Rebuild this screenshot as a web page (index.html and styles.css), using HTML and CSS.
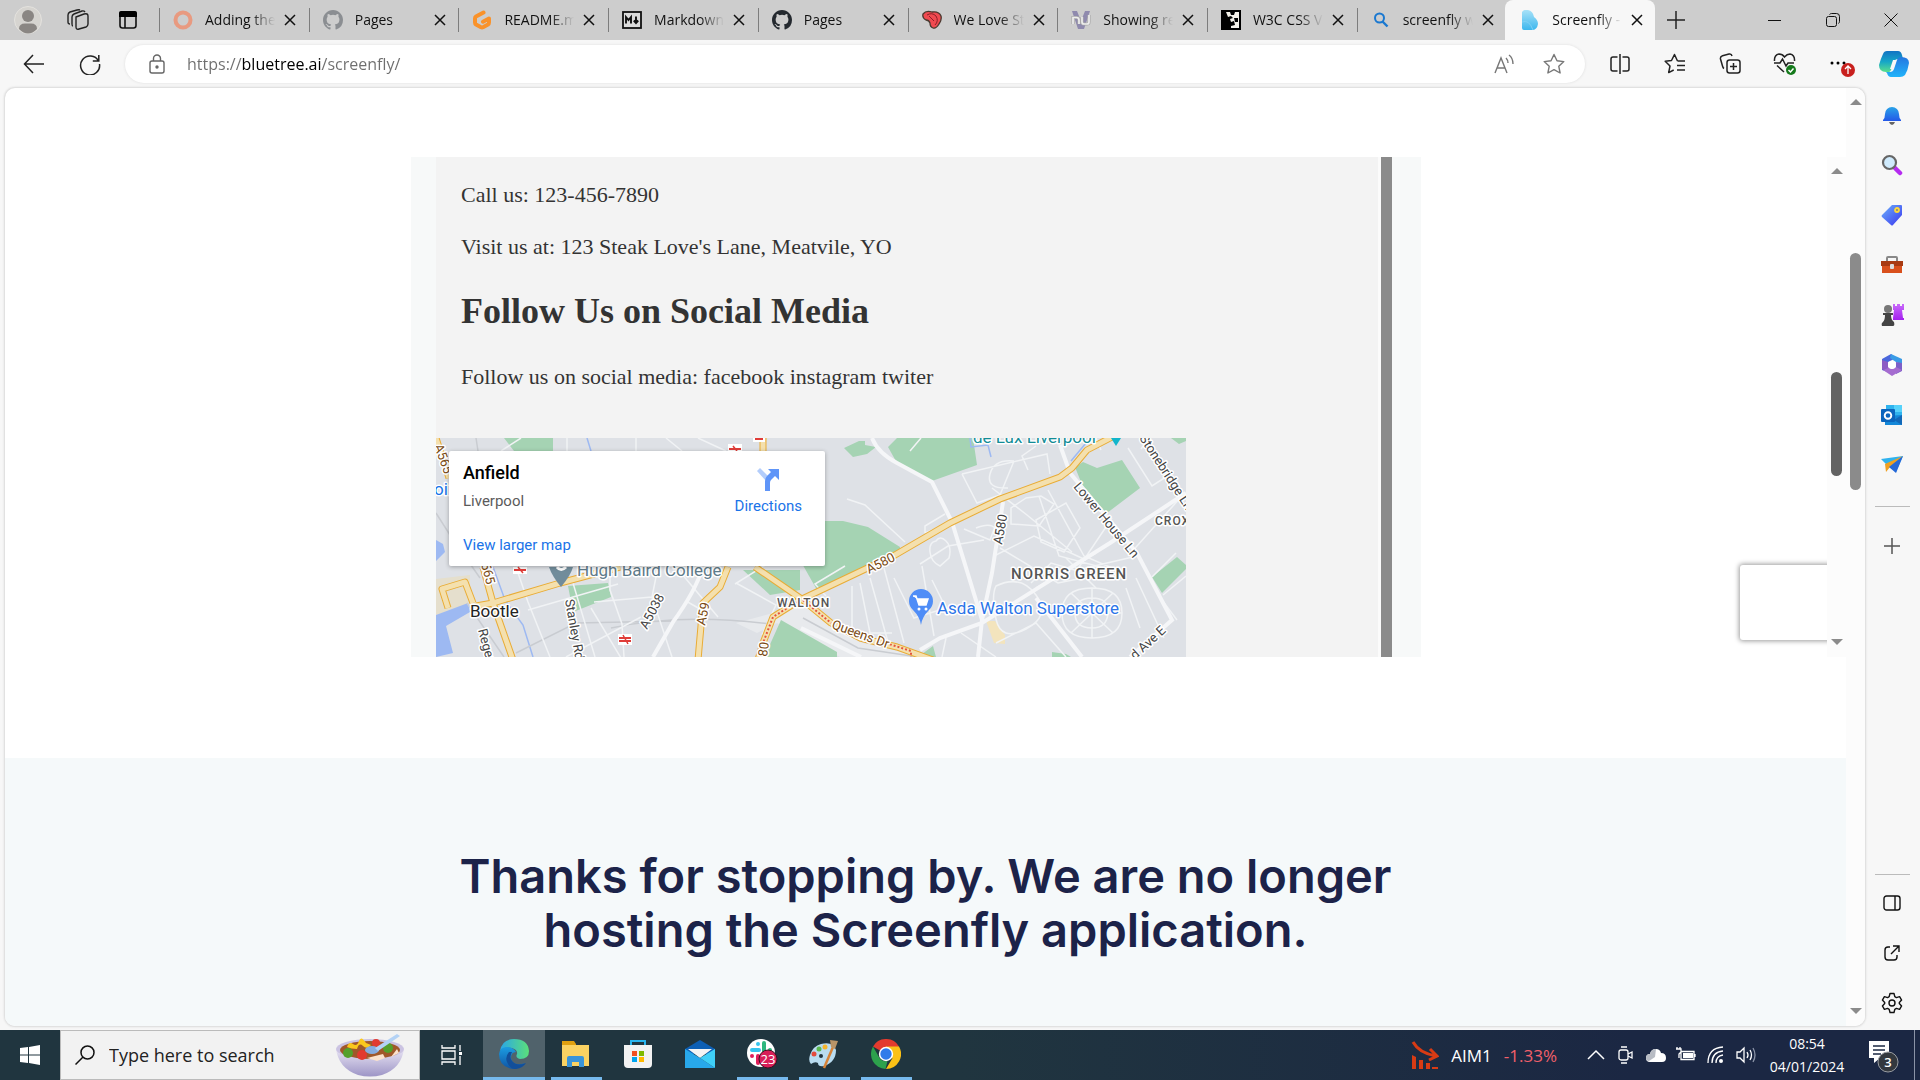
FILE: index.html
```html
<!DOCTYPE html>
<html lang="en">
<head>
<meta charset="utf-8">
<title>Screenfly</title>
<link rel="stylesheet" href="styles.css">
</head>
<body>
<svg class="defs" aria-hidden="true">
  <defs>
    <symbol id="x" viewBox="0 0 12 12"><path d="M1 1l10 10M11 1L1 11" fill="none" stroke="#111" stroke-width="1.5"/></symbol>
    <symbol id="github" viewBox="0 0 16 16"><path fill="currentColor" d="M8 0C3.58 0 0 3.58 0 8c0 3.54 2.29 6.53 5.47 7.59.4.07.55-.17.55-.38 0-.19-.01-.82-.01-1.49-2.01.37-2.53-.49-2.69-.94-.09-.23-.48-.94-.82-1.13-.28-.15-.68-.52-.01-.53.63-.01 1.08.58 1.23.82.72 1.21 1.87.87 2.33.66.07-.52.28-.87.51-1.07-1.78-.2-3.64-.89-3.64-3.95 0-.87.31-1.59.82-2.15-.08-.2-.36-1.02.08-2.12 0 0 .67-.21 2.2.82a7.6 7.6 0 014 0c1.53-1.04 2.2-.82 2.2-.82.44 1.1.16 1.92.08 2.12.51.56.82 1.27.82 2.15 0 3.07-1.87 3.75-3.65 3.95.29.25.54.73.54 1.48 0 1.07-.01 1.93-.01 2.2 0 .21.15.46.55.38A8.01 8.01 0 0016 8c0-4.42-3.58-8-8-8z"/></symbol>
    <linearGradient id="gBlue" x1="0" y1="0" x2="0" y2="1"><stop offset="0" stop-color="#29a3e8"/><stop offset="1" stop-color="#2358e8"/></linearGradient>
    <linearGradient id="gTag" x1="0" y1="0" x2="1" y2="1"><stop offset="0" stop-color="#6cb2fa"/><stop offset="1" stop-color="#3a35f0"/></linearGradient>
    <linearGradient id="gPurple" x1="0" y1="0" x2="0" y2="1"><stop offset="0" stop-color="#c86bfa"/><stop offset="1" stop-color="#a420ee"/></linearGradient>
    <linearGradient id="gCop1" x1="0" y1="0" x2="0" y2="1"><stop offset="0" stop-color="#1273c4"/><stop offset=".5" stop-color="#16a6c8"/><stop offset="1" stop-color="#5be08c"/></linearGradient>
    <linearGradient id="gCop2" x1="0" y1="0" x2="0" y2="1"><stop offset="0" stop-color="#2476e0"/><stop offset="1" stop-color="#22b4fa"/></linearGradient>
    <linearGradient id="gEdge" x1="0" y1="0" x2="1" y2="0"><stop offset="0" stop-color="#2aa6e8"/><stop offset="1" stop-color="#5be07a"/></linearGradient>
    <linearGradient id="gEdge2" x1="0" y1="0" x2="0" y2="1"><stop offset="0" stop-color="#1b9de2"/><stop offset="1" stop-color="#1055a5"/></linearGradient>
    <linearGradient id="gBowl" x1="0" y1="0" x2="0" y2="1"><stop offset="0" stop-color="#ece8f6"/><stop offset="1" stop-color="#9d95c6"/></linearGradient>
    <linearGradient id="gFly" x1="0" y1="0" x2="0" y2="1"><stop offset="0" stop-color="#a9e2f8"/><stop offset="1" stop-color="#3db7ee"/></linearGradient>
  </defs>
</svg>

<div class="browser">
  <header class="tabstrip">
    <div class="strip-tools">
      <button aria-label="Profile"><svg width="28" height="28" viewBox="0 0 28 28"><circle cx="14" cy="14" r="13.500" fill="#d6d4d0" stroke="#e4e2de"/><circle cx="14" cy="10" r="6" fill="#8a8683"/><path d="M5 23q0-5.500 6-5.500h6q6 0 6 5.500-9 9-18 0z" fill="#8a8683"/></svg></button>
      <button aria-label="Workspaces"><svg width="22" height="22" viewBox="0 0 22 22" fill="none" stroke="#222" stroke-width="1.400"><path d="M9 8l8-3q4-1 4 2v8q0 2-2 3l-7 2q-3 1-3-2z"/><path d="M6 17q-1 0-1-2V8q0-2 2-3l8-3q2-.500 3 1M3 15q-2 0-2-2V6q0-2 2-3l7-2q2-.500 3 0"/></svg></button>
      <button aria-label="Tab actions"><svg width="20" height="20" viewBox="0 0 20 20"><rect x="2" y="2" width="16" height="16" rx="2.500" fill="none" stroke="#111" stroke-width="1.600"/><path d="M1 7V3q0-2 2-2h14q2 0 2 2v4z" fill="#000"/><path d="M7 7v11" stroke="#111" stroke-width="1.600"/></svg></button>
    </div>
    <nav class="tabs" aria-label="Tabs">
      <div class="tab"><svg class="fav" viewBox="0 0 20 20"><circle cx="10" cy="10" r="7.500" fill="none" stroke="#e89a80" stroke-width="4"/></svg><span class="tab-title">Adding the</span><button aria-label="Close tab"><svg class="x"><use href="#x"/></svg></button></div>
      <div class="tab"><svg class="fav gh-grey"><use href="#github"/></svg><span class="tab-title">Pages</span><button aria-label="Close tab"><svg class="x"><use href="#x"/></svg></button></div>
      <div class="tab"><svg class="fav" viewBox="0 0 20 20"><path d="M11.500 2.500L4 6.500q-1 .600-1 2v4q0 1.400 1 2l5 2.700q1 .500 2 0l5-2.700q1-.600 1-2V8.500l-6 3.200" fill="none" stroke="#f9922a" stroke-width="4" stroke-linecap="round" stroke-linejoin="round"/></svg><span class="tab-title">README.md</span><button aria-label="Close tab"><svg class="x"><use href="#x"/></svg></button></div>
      <div class="tab"><svg class="fav" viewBox="0 0 20 20"><rect x="1" y="2" width="18" height="16" fill="#dcdcdc" stroke="#111" stroke-width="1.800"/><path d="M4 13.500V7l2.500 3L9 7v6.500M14 6.500v6M11.800 10.500L14 13l2.200-2.500" fill="none" stroke="#111" stroke-width="1.900"/></svg><span class="tab-title">Markdown</span><button aria-label="Close tab"><svg class="x"><use href="#x"/></svg></button></div>
      <div class="tab"><svg class="fav gh-dark"><use href="#github"/></svg><span class="tab-title">Pages</span><button aria-label="Close tab"><svg class="x"><use href="#x"/></svg></button></div>
      <div class="tab"><svg class="fav" viewBox="0 0 20 20"><path d="M1 4q3-4 9-2 7-1 9 4 1 4-2 8-3 5-6 4-3-1-3-5-1-3-4-3-4-2-3-6z" fill="#f04a50" stroke="#4a3a30" stroke-width="1.300"/><path d="M5 5q5-3 9 1 3 5-1 9M7 6l5 5" fill="none" stroke="#8c1f28" stroke-width="1"/></svg><span class="tab-title">We Love Steak</span><button aria-label="Close tab"><svg class="x"><use href="#x"/></svg></button></div>
      <div class="tab"><svg class="fav" viewBox="0 0 20 20"><path d="M1 1h5l4 10 4-10h5l-6 18H7z" fill="#8f8aae"/><path d="M2 14V7.500h3.500Q8 7.500 8 10v4m3-7v5q0 2 2 2h3q2 0 2-2V5" fill="none" stroke="#aaa" stroke-width="3.200"/><path d="M2 14V7.500h3.500Q8 7.500 8 10v4m3-7v5q0 2 2 2h3q2 0 2-2V5" fill="none" stroke="#eee" stroke-width="1.700"/></svg><span class="tab-title">Showing results</span><button aria-label="Close tab"><svg class="x"><use href="#x"/></svg></button></div>
      <div class="tab"><svg class="fav" viewBox="0 0 20 20"><path d="M0 0h20v20H0z"/><path d="M5 2l4 0 1 3 3 0 1-3h4v16h-8v-2l4-1-1-4-3 1-1-3 3-1-2-2-3 1z" fill="#f4f1ea"/><path d="M13 8h4v4h-3z"/></svg><span class="tab-title">W3C CSS Validator</span><button aria-label="Close tab"><svg class="x"><use href="#x"/></svg></button></div>
      <div class="tab"><svg class="fav" viewBox="0 0 20 20"><circle cx="8.500" cy="8" r="4.500" fill="none" stroke="#1a78d0" stroke-width="2"/><path d="M11.500 11.500l5 5" stroke="#1a78d0" stroke-width="2.400"/></svg><span class="tab-title">screenfly website</span><button aria-label="Close tab"><svg class="x"><use href="#x"/></svg></button></div>
      <div class="tab active"><svg class="fav" viewBox="0 0 20 20"><path d="M2 2q2-3 6-2 5 1 6 7 4 3 4 7-1 6-6 6H4q-2 0-2-2z" fill="url(#gFly)"/><path d="M2 12q7-3 11 8" fill="none" stroke="#7fd0f4"/></svg><span class="tab-title">Screenfly - BlueTree</span><button aria-label="Close tab"><svg class="x"><use href="#x"/></svg></button></div>
    </nav>
    <button class="newtab" aria-label="New tab"><svg width="18" height="18" viewBox="0 0 18 18"><path d="M9 0v18M0 9h18" stroke="#222" stroke-width="1.500"/></svg></button>
    <div class="winctl">
      <button aria-label="Minimise"><svg width="14" height="14" viewBox="0 0 14 14"><path d="M0 7.500h13" stroke="#111"/></svg></button>
      <button aria-label="Restore"><svg width="14" height="14" viewBox="0 0 14 14" fill="none" stroke="#111"><rect x=".5" y="3.500" width="10" height="10" rx="2"/><path d="M3.500 1.500q1-1 2-1h5q3 0 3 3v5q0 1-1 2"/></svg></button>
      <button aria-label="Close window"><svg width="14" height="14" viewBox="0 0 14 14"><path d="M.5 .5l13 13M13.500 .5l-13 13" stroke="#111"/></svg></button>
    </div>
  </header>

  <div class="toolbar">
    <button aria-label="Back"><svg width="22" height="20" viewBox="0 0 22 20"><path d="M21 10H2M10 1L1.500 10l8.500 9" fill="none" stroke="#222" stroke-width="1.500"/></svg></button>
    <button aria-label="Refresh"><svg width="22" height="22" viewBox="0 0 22 22"><path d="M19.500 8A9.500 9.500 0 1 0 20.500 11M19.800 2v6h-6" fill="none" stroke="#222" stroke-width="1.500"/></svg></button>
    <div class="address">
      <svg width="18" height="20" viewBox="0 0 18 20" fill="none" stroke="#666" stroke-width="1.400"><rect x="2" y="7" width="14" height="12" rx="2"/><path d="M5.500 7V4.500a3.500 3.500 0 0 1 7 0V7"/><circle cx="9" cy="13" r="1" fill="#666"/></svg>
      <input class="url" aria-label="Address" value="https://bluetree.ai/screenfly/">
      <button aria-label="Read aloud"><svg width="20" height="20" viewBox="0 0 20 20" fill="none" stroke="#777" stroke-width="1.400"><path d="M1 19L7 4l6 15M3 14h8M12 4q2 2 2 5M15 1q4 3 4 9"/></svg></button>
      <button aria-label="Favourite"><svg width="22" height="22" viewBox="0 0 22 22"><path d="M11 1.500l3 6.200 6.800.900-5 4.700 1.300 6.700-6.100-3.300L4.900 20l1.300-6.700-5-4.700 6.800-.900z" fill="none" stroke="#777" stroke-width="1.400" stroke-linejoin="round"/></svg></button>
    </div>
    <div class="tools">
      <button aria-label="Split screen"><svg width="20" height="20" viewBox="0 0 20 20" fill="none" stroke="#222" stroke-width="1.500"><path d="M7.500 3H3Q1 3 1 5v10q0 2 2 2h4.500M12.500 3H17q2 0 2 2v10q0 2-2 2h-4.500M10 0v20"/></svg></button>
      <button aria-label="Favourites"><svg width="22" height="22" viewBox="0 0 22 22" fill="none" stroke="#222" stroke-width="1.500"><path d="M13.500 8L10.500 1.500l-3 6-6.300.800 4.800 4.700-1.300 6.600 5-2.600M13.500 8H21M13 12.500h8M13 17h8" stroke-linejoin="round"/></svg></button>
      <button aria-label="Collections"><svg width="22" height="22" viewBox="0 0 22 22" fill="none" stroke="#222" stroke-width="1.500"><rect x="8" y="7" width="13" height="13" rx="2.500"/><path d="M14.500 10v7M11 13.500h7M5 15.500Q4 15 3.500 13L1.500 6q-.500-2.500 2-3.200L10 1q2.500-.500 3 2"/></svg></button>
      <button aria-label="Browser essentials"><svg width="24" height="24" viewBox="0 0 24 24" fill="none" stroke="#222" stroke-width="1.500"><path d="M1.500 9Q1 3 6 2q3.500 0 5.500 3Q14 2 17 2q5 1 4.500 7M1 11h6l2.500-4 3.500 7 2-3h6M4 13.500l7 6.500"/><circle cx="18" cy="18" r="5" fill="#157a1c" stroke="none"/><path d="M15.500 18l2 2 3-3.500" stroke="#fff"/></svg></button>
      <button aria-label="Settings and more"><svg width="30" height="26" viewBox="0 0 30 26"><circle cx="7" cy="12" r="1.500"/><circle cx="13" cy="12" r="1.500"/><circle cx="19" cy="12" r="1.500"/><circle cx="23" cy="19" r="7" fill="#c8201e"/><path d="M23 23v-7.500M20 18l3-3 3 3" fill="none" stroke="#fff" stroke-width="1.300"/></svg></button>
      <button class="copilot" aria-label="Copilot"><svg width="30" height="28" viewBox="0 0 30 28"><path d="M8 1h11q3 0 4 4l1 4h-5q-3 0-4 3l-3 8q-1 3-5 2-7 0-7-7Q2 8 4 4q1-3 4-3z" fill="url(#gCop1)"/><path d="M21 27H12q-3 0-4-4l-1-1h4q3 0 4-3l3-9q1-3 4-3 8 0 8 6-1 7-4 12-2 2-5 2z" fill="url(#gCop2)"/><path d="M14 10h3l-3 9h-3z" fill="#f7f7f7"/></svg></button>
    </div>
  </div>

  <div class="middle">
    <main class="page">
      <div class="content">
        <section class="preview">
          <div class="stage">
            <article class="device">
              <div class="site">
                <div class="copy">
                  <p>Call us: 123-456-7890</p>
                  <p>Visit us at: 123 Steak Love's Lane, Meatvile, YO</p>
                  <h2>Follow Us on Social Media</h2>
                  <p>Follow us on social media: facebook instagram twiter</p>
                </div>
                <div class="map">
                  <svg class="map-art" viewBox="0 0 750 219" width="750" height="219">
                    <path fill="#dee1e6" d="M0 0h750v219H0z"/>
                    <path fill="#e5dfcd" d="M0 141l34-4 0 28-34 12z"/>
                    <path fill="#e8eaed" d="M300 185l67-18 60 38 60 14H404l-63-34-20 10z"/>
                    <g fill="#a5d3b3">
                      <path d="M68 0h49v13H78zM452 9l9-9h76l4 27-45 16-35-18zM408 10l15-7 6 0v4l11 2-9 7-14 3zM371 83h36l25 6 32 20v5l-83 38-17-30zM639 29l8-5 14 6 25-8 18 28-33 25-20-16zM716 139l25-20 9 8v4l-24 24zM345 182l56 32v8h-74zM132 148l40-3 3 14-38 15zM307 132h57v20l-30 5zM497 208l3 11h-18zM616 214l14 2 10 6h-24zM735 0h15v3l-7 3z"/>
                    </g>
                    <path fill="#9db9f2" d="M0 102l7 4 2 8-9 9zM0 177l32-12 2 9-24 14 7 27-17 4z"/>
                    <path fill="#f3e4bd" d="M550 183l9 0 10 14 0 9-11-1z"/>
                    <g fill="none" stroke="#9db9f2" stroke-width="1.500"><path d="M151 0l4 13M57 129l12 33 18 25 10 32M534 0l1 9 17-2 3 12M650 5l-15 18"/></g>
                    <g fill="none" stroke="#c9ccd1" stroke-width="1.500"><path d="M0 75l14 22 30 43M40 0l2 13M31 165l37 54M175 190q70-15 160-4M80 215l60-30 100-2M367 180l55 30 60 9"/></g>
                    <g fill="none" stroke="#f1f3f5" stroke-width="1.500">
                      <path d="M85 0l-20 13M131 0v13M200 0v13M230 0l16 13M262 0l28 13M80 129l12 35 22 55M92 172l90-26M130 219l75-40M137 145l22 74M174 130v22l12 34 2 33M222 129l-6 30M216 159l-58 5M216 159l20 60M240 129l42 50M300 145l40 22-14 30M250 163l14 8M155 170l30 50"/>
                      <path d="M411 61l18 6 40 37M485 0l-11 13M526 36l15 29 23-8 14-34M578 23q-20-2-24 13t18 14M526 36l85-20 3 20M600 8l-14 10 6 14M489 95v-7l20-12M489 95l34-13 34-21M556 50l35 27 45 37M590 60l-15 10v16l28 2 15-22-13-8zM612 52l36 66 28 12M540 90q30-12 18 28l40-20 52 24M564 110l58 35 50-10M566 70l-12 32-26-11M603 58l20 60 45 12M630 65l14 25-16 24-23-10-5-22zM676 80l-35 52 60-14M660 0l5 12M692 10l24 38 20-13M705 11l8-11M692 118l53-59M716 139l24-24"/>
                      <path d="M500 103q4-6 10 0t3 17l-9 8q-9-4-10-14t6-11zM484 126l28-18 36-6M416 148v52l-8-4M424 145l10 50h22M434 140l18 64M448 130l20 75M486 128l12 70M496 142l14 28 28 8M510 170l-32 10-20-40M560 148q25-12 40 9t-10 34-30-10 0-33zM595 145l20-20 34 10M656 200q-30 0-30-25t30-25 30 25-30 25zM656 190q-17 0-17-15t17-15 16 15-16 15zM656 150v50M626 175h60M635 155l42 40M677 155l-42 40M690 150l14 40M700 140l28 60M600 150l60-35M560 205l40-20 30 34M510 200l-4 19M525 195l35 24"/>
                      <path d="M390 158l-11-12 30-18M299 146l35-22M727 157l23-19M741 182l-15-20M630 120l30 30"/>
                    </g>
                    <g fill="none" stroke="#f5f6f8" stroke-width="4"><path d="M436 0q6 15 25 25l35 19 20 40 30 98-4 37M567 64l-11 71-10 47M624 7l10 28 67 80 35 67-42 37M484 212l20-12 42-15 128-80 76-50M267 129q-8 25-30 55l-20 35M365 190l60 29M600 160l46 59"/></g>
                    <g fill="none" stroke-linejoin="round">
                      <path stroke="#e9ac35" stroke-width="7" d="M0 0l13 40M47 129l10 36 20 57M37 165l-8-21-23 7 6 19M40 168l17-3 67-20 60-16M292 129l-8 20-17 16-5 57M319 129l48 33 28 23 29 15 37 9 36 13M364 162l95-45 55-32 50-24 60-22 12-9 15-18 29-15M364 162l-27 17-10 26-6 20M327 0v13"/>
                      <path stroke="#f4e0ae" stroke-width="5" d="M0 0l13 40M47 129l10 36 20 57M37 165l-8-21-23 7 6 19M40 168l17-3 67-20 60-16M292 129l-8 20-17 16-5 57M319 129l48 33 28 23 29 15 37 9 36 13M364 162l95-45 55-32 50-24 60-22 12-9 15-18 29-15M364 162l-27 17-10 26-6 20M327 0v13"/>
                      <path stroke="#e5533d" stroke-width="2" stroke-dasharray="2 2" d="M364 162l-27 17-10 26M367 162l28 23M450 205l25 8v7"/>
                    </g>
                    <g><path fill="#fff" d="M77 129h14v7H77zM182 196h14v11h-14zM292 6h14v8h-14zM317 0h12v4h-12z"/><path d="M78 132h12M183 200h12M183 203h12M293 11h12M319 1h8" stroke="#e03c38" stroke-width="2" fill="none"/><path d="M187 197l5 9M82 129l5 6M297 8l4 5" stroke="#e03c38" stroke-width="1.500"/></g>
                    <path d="M113 129h24q-2 8-12 20-9-11-12-20z" fill="#718c9b"/><path d="M121 129q4 5 9 0" fill="none" stroke="#fff" stroke-width="3"/>
                    <path d="M675 0h10l-5 8z" fill="#12b5cb"/>
                    <path d="M485 187q-1-8-8-15a12 12 0 1 1 16 0q-7 7-8 15z" fill="#4f8df7"/>
                    <path d="M477 158h3l3 9h7l2-6h-11" fill="#fff" stroke="#fff" stroke-width="1.500"/><circle cx="483" cy="171" r="1.500" fill="#fff"/><circle cx="490" cy="171" r="1.500" fill="#fff"/>
                    <g class="labels">
                      <text x="141" y="138" font-size="17" fill="#5f7b8a">Hugh Baird College</text>
                      <text x="34" y="179" font-size="17" fill="#222">Bootle</text>
                      <text x="-2" y="57" font-size="17" fill="#1a73e8">oir</text>
                      <text x="501" y="176" font-size="17" fill="#2b74e8">Asda Walton Superstore</text>
                      <text x="537" y="5" font-size="17" fill="#128c96">de Lux Liverpool</text>
                      <text x="575" y="141" class="area">NORRIS GREEN</text>
                      <text x="341" y="169" class="area small">WALTON</text>
                      <text x="719" y="87" class="area small">CROXTETH</text>
                      <text transform="translate(433 136)rotate(-27)" fill="#7a4a12">A580</text>
                      <text transform="translate(566 107)rotate(-80)">A580</text>
                      <text transform="translate(211 192)rotate(-62)">A5038</text>
                      <text transform="translate(269 188)rotate(-78)" fill="#7a4a12">A59</text>
                      <text transform="translate(331 219)rotate(-83)" fill="#7a4a12">80</text>
                      <text transform="translate(395 190)rotate(20)" fill="#7a4a12">Queens Dr</text>
                      <text transform="translate(637 49)rotate(50)">Lower House Ln</text>
                      <text transform="translate(703 0)rotate(57)">Stonebridge Ln</text>
                      <text transform="translate(699 222)rotate(-42)">d Ave E</text>
                      <text transform="translate(129 162)rotate(80)">Stanley Rd</text>
                      <text transform="translate(42 192)rotate(75)">Regent</text>
                      <text transform="translate(45 126)rotate(75)" fill="#7a4a12">565</text>
                      <text transform="translate(-2 8)rotate(70)" fill="#7a4a12">A565</text>
                    </g>
                  </svg>
                  <div class="place">
                    <div class="place-info">
                      <strong>Anfield</strong>
                      <span>Liverpool</span>
                      <a href="#map">View larger map</a>
                    </div>
                    <a class="directions" href="#directions"><svg width="24" height="24" viewBox="0 0 24 24"><path d="M1 3l3-3 9 9-3 4z" fill="#b3cdfb"/><path d="M9 23V13q0-3 2-5l4-4-3-3h11v11l-4-4-4 4q-1 1-1 3v8z" fill="#5f95f8"/></svg>Directions</a>
                  </div>
                </div>
              </div>
              <div class="site-scroll"></div>
            </article>
            <div class="popup"></div>
          </div>
          <div class="scrollbar inner"><i class="up"></i><div class="track"><b></b></div><i class="down"></i></div>
        </section>
        <section class="notice"><h1>Thanks for stopping by. We are no longer<br>hosting the Screenfly application.</h1></section>
      </div>
      <div class="scrollbar outer"><i class="up"></i><div class="track"><b></b></div><i class="down"></i></div>
    </main>

    <aside class="sidebar">
      <div class="side-group">
        <button aria-label="Notifications"><svg width="22" height="22" viewBox="0 0 22 22"><path d="M2 16q2-2 2-6a7 7 0 0 1 14 0q0 4 2 6v1H2z" fill="url(#gBlue)"/><path d="M8 18h6q-1 3-3 3t-3-3z" fill="#666"/></svg></button>
        <button aria-label="Search"><svg width="22" height="22" viewBox="0 0 22 22"><path d="M14 14l5 5" stroke="#b52bf0" stroke-width="4.500" stroke-linecap="round"/><circle cx="8.500" cy="8.500" r="6.500" fill="#cfeafc" stroke="#666" stroke-width="2.200"/></svg></button>
        <button aria-label="Shopping"><svg width="22" height="22" viewBox="0 0 22 22"><path d="M11 1h9q1 0 1 1v9L12 21q-1 1-2 0l-9-8q-1-1 0-2z" fill="url(#gTag)"/><circle cx="16" cy="6" r="2" fill="#888" stroke="#ffd83a" stroke-width="1.800"/></svg></button>
        <button aria-label="Tools"><svg width="24" height="20" viewBox="0 0 24 20"><path d="M7 6V3q0-1 1-1h8q1 0 1 1v3" fill="none" stroke="#888" stroke-width="2"/><path d="M1 6h22v5H1z" fill="#a83a12"/><path d="M2 11h20v7H2z" fill="#d9501c"/><rect x="10" y="9" width="4" height="5" rx="1" fill="#ddd"/></svg></button>
        <button aria-label="Games"><svg width="24" height="24" viewBox="0 0 24 24"><path d="M13 1h2v2h2V1h3v2h2V1h2v6h-2l1 8h1v2H13v-2l1-8h-1z" fill="url(#gPurple)"/><circle cx="8" cy="6" r="4" fill="#777"/><path d="M3 10h10v2h-2q0 5 3 7 1 4-1 4H2q-1-3 1-4 2-2 2-7H3z" fill="#444"/></svg></button>
        <button aria-label="Microsoft 365"><svg width="22" height="24" viewBox="0 0 22 24"><path d="M10 1L1 6v11l6 2V9l8-4z" fill="#4a67dc"/><path d="M10 1l11 5v6l-6-3-6-4z" fill="#3a9be6"/><path d="M21 10v8l-6 3V9z" fill="#7d5fc8"/><path d="M2 17l9 6 10-6-6-3-4 2-4-2z" fill="#a56cd0"/><path d="M1 7l6 2v6l-5 2-1-1z" fill="#8d5bc4"/><circle cx="11" cy="12" r="4" fill="#fff"/></svg></button>
        <button aria-label="Outlook"><svg width="22" height="22" viewBox="0 0 22 22"><path d="M5 1h16v12H5z" fill="#2fb3ee"/><path d="M13 1h8v7h-8z" fill="#56d2fb"/><path d="M4 12l17-1v10H4z" fill="#1487d8"/><path d="M21 11v10l-8-5z" fill="#1268b8"/><rect x="0" y="5" width="14" height="13" rx="1" fill="#0b65bd"/><circle cx="7" cy="11.500" r="3.300" fill="none" stroke="#fff" stroke-width="1.900"/></svg></button>
        <button aria-label="Drop"><svg width="22" height="20" viewBox="0 0 22 20"><path d="M0 4L22 1l-7 16-7-5-2 3-1-6z" fill="#2fb2ee"/><path d="M22 1L4 9l1 8 4-5z" fill="#f0a020"/><path d="M22 1L8 12l7 6z" fill="#2568d8"/></svg></button>
      </div>
      <hr>
      <button class="side-add" aria-label="Customise"><svg width="16" height="16" viewBox="0 0 16 16"><path d="M8 0v16M0 8h16" stroke="#555" stroke-width="1.500"/></svg></button>
      <div class="side-bottom">
        <hr>
        <button aria-label="Hide sidebar"><svg width="18" height="16" viewBox="0 0 18 16" fill="none" stroke="#111" stroke-width="1.400"><rect x="1" y="1" width="16" height="14" rx="2.500"/><path d="M12 1v14"/></svg></button>
        <button aria-label="Open link"><svg width="16" height="16" viewBox="0 0 16 16" fill="none" stroke="#111" stroke-width="1.400"><path d="M6 2H4Q1 2 1 5v7q0 3 3 3h6q3 0 3-3v-2M9 1h6v6M15 1L7 9"/></svg></button>
        <button aria-label="Settings"><svg width="22" height="22" viewBox="0 0 22 22" fill="none" stroke="#111" stroke-width="1.400" stroke-linejoin="round"><circle cx="11" cy="11" r="3"/><path d="M9 1.500h4l.8 3.200 1.600.9 3.200-.9 2 3.400-2.300 2.300v1.200l2.300 2.300-2 3.400-3.200-.9-1.600.9-.8 3.200H9l-.8-3.200-1.600-.9-3.200.9-2-3.400 2.300-2.300v-1.200L1.400 8.100l2-3.400 3.200.9 1.600-.9z"/></svg></button>
      </div>
    </aside>
  </div>

  <footer class="taskbar">
    <button class="start" aria-label="Start"><svg width="20" height="20" viewBox="0 0 20 20" fill="#fff"><path d="M0 3l8-1v7.500H0zM9 2l11-2v9.500H9zM0 10.500h8V18l-8-1zM9 10.500h11V20L9 18z"/></svg></button>
    <div class="search">
      <svg width="20" height="20" viewBox="0 0 20 20" fill="none" stroke="#111" stroke-width="1.500"><circle cx="12.500" cy="7.500" r="6.500"/><path d="M8 12l-7.500 7.500"/></svg>
      <input aria-label="Search" value="Type here to search">
      <svg width="70" height="44" viewBox="0 0 70 44"><path d="M1 15q2 20 22 27 12 3 24 0 20-7 22-27z" fill="url(#gBowl)"/><ellipse cx="35" cy="16" rx="34" ry="10" fill="#cbc3e2"/><ellipse cx="35" cy="17" rx="30" ry="9" fill="#a0582a"/><path d="M12 14q2-6 6-3t6-3 7 2l5 2q-4 5-8 1t-6 3q-6 0-10-2z" fill="#fac81e"/><circle cx="13" cy="20" r="5" fill="#54a02c"/><circle cx="53" cy="15" r="5" fill="#54a02c"/><circle cx="27" cy="22" r="5" fill="#e23a30"/><circle cx="41" cy="10" r="4" fill="#e23a30"/><path d="M32 25l16-4 2 4-8 3zM56 24l6-8 2 4z" fill="#fbe2cc"/><ellipse cx="37" cy="17" rx="7" ry="4" fill="#87acdf"/><path d="M40 15L62 1l3 2-22 15z" fill="#b3d2f5"/></svg>
    </div>
    <button class="taskview" aria-label="Task view"><svg width="22" height="20" viewBox="0 0 22 20" fill="none" stroke="#fff" stroke-width="1.300"><path d="M1 0v3h13V0M1 20v-3h13v3M1 6h13v8H1zM19 0v6M19 11v9"/><path d="M18 7h3v3h-3z" fill="#fff" stroke="none"/></svg></button>
    <div class="apps">
      <button class="current" aria-label="Edge"><svg width="30" height="30" viewBox="0 0 30 30"><path d="M1 12Q3 0 15 0q14 0 15 12 0 8-9 8-5-1-3-5 1-4-5-6Q5 7 1 12z" fill="url(#gEdge)"/><path d="M0 15Q1 8 8 8q6 0 9 5-5 0-5 6 2 9 14 5Q20 30 14 30 0 28 0 15z" fill="url(#gEdge2)"/><path d="M10 13q-5 6-1 12 3 5 8 5 7-1 10-6-9 4-14-2-3-4 0-9z" fill="#124f9a"/></svg></button>
      <button class="open" aria-label="File Explorer"><svg width="28" height="28" viewBox="0 0 28 28"><path d="M0 1h12l2 3v5H0z" fill="#e0a010"/><path d="M0 5h27v21H0z" fill="#fad262"/><path d="M5 27v-9q0-2 2-2h13q2 0 2 2v9h-5v-5h-7v5z" fill="#3a94d8"/></svg></button>
      <button aria-label="Store"><svg width="30" height="30" viewBox="0 0 30 30"><path d="M8 6V2h14v4" fill="none" stroke="#28b4ee" stroke-width="2"/><path d="M1 6h28v19q0 4-4 4H5q-4 0-4-4z" fill="#f2f2f2"/><path d="M9 12h5v5H9z" fill="#f25022"/><path d="M16 12h5v5h-5z" fill="#7fba00"/><path d="M9 18h5v5H9z" fill="#00a4ef"/><path d="M16 18h5v5h-5z" fill="#ffb900"/></svg></button>
      <button aria-label="Mail"><svg width="30" height="28" viewBox="0 0 30 28"><path d="M0 9L15 0l15 9v5H0z" fill="#0d5fb4"/><path d="M3 9h24l-12 9z" fill="#f4f4f4"/><path d="M0 9l15 9 15 10H0z" fill="#28a8ea"/><path d="M30 9v19L15 18z" fill="#3fd0f8"/></svg></button>
      <button class="open" aria-label="Slack"><svg width="32" height="32" viewBox="0 0 32 32"><circle cx="15" cy="15" r="14" fill="#fff"/><g fill="none" stroke-linecap="round" stroke-width="4"><path d="M12 6v0M6 12h7" stroke="#36c5f0"/><path d="M18 5v8M24 12h0" stroke="#2eb67d"/><path d="M12 18v7M6 18h0" stroke="#e01e5a"/></g><circle cx="22" cy="21" r="9" fill="#d81e58" stroke="#3c1020"/><text x="22" y="26" text-anchor="middle" font-size="13" fill="#fff">23</text></svg></button>
      <button class="open" aria-label="Paint"><svg width="30" height="30" viewBox="0 0 30 30"><path d="M12 5q12-3 15 6 0 12-12 16-6 1-6-3-3-2-7 1-3-3-1-9 3-9 11-11z" fill="#b9dcf0"/><circle cx="5" cy="15" r="2.500" fill="#e44a3c"/><circle cx="10" cy="10" r="2.500" fill="#5cb84c"/><circle cx="16" cy="8" r="2.500" fill="#f5b42c"/><circle cx="12" cy="17" r="2" fill="#23343e"/><path d="M24 8L15 29" stroke="#d78338" stroke-width="2.500"/><path d="M21 1l8 1-3 8-4-2z" fill="#b89468"/></svg></button>
      <button class="open" aria-label="Chrome"><svg width="30" height="30" viewBox="0 0 30 30"><path d="M15 15L2 7.500A15 15 0 0 1 28 7.500z" fill="#e33b2e"/><path d="M15 15V7.500h13A15 15 0 0 1 15 30l6.500-11z" fill="#fbc116"/><path d="M2 7.500L8.500 19q3 4 8 3L14.500 30A15 15 0 0 1 2 7.500z" fill="#2da14c"/><circle cx="15" cy="15" r="7.200" fill="#fff"/><circle cx="15" cy="15" r="5.700" fill="#2f7bea"/></svg></button>
    </div>
    <div class="tray">
      <button class="stock"><svg width="28" height="30" viewBox="0 0 28 30"><path d="M2 2q6 11 23 14M19 9l7 7-8 4" fill="none" stroke="#d83b14" stroke-width="3"/><path d="M1 15l4 2v12H1zM8 20h4v9H8zM15 23h4v6h-4zM21 27h6v2h-6z" fill="#d83b14"/></svg><span>AIM1</span><span class="loss">-1.33%</span></button>
      <div class="status">
        <button aria-label="Hidden icons"><svg width="18" height="18" viewBox="0 0 18 18"><path d="M1 13l8-8 8 8" fill="none" stroke="#fff" stroke-width="1.500"/></svg></button>
        <button aria-label="Meet now"><svg width="18" height="18" viewBox="0 0 18 18" fill="none" stroke="#fff" stroke-width="1.300"><rect x="2" y="4" width="9" height="10" rx="2"/><path d="M11 8l4-2v6l-4-2M4 1h6M4 17h6"/></svg></button>
        <button aria-label="OneDrive"><svg width="20" height="18" viewBox="0 0 20 18"><path d="M0 12q0-4 4-4 1-5 6-5 4 0 5 4 5 0 5 5 0 4-4 4H4q-4 0-4-4z" fill="#fff"/><path d="M0 12q0-4 4-4 1-5 6-5l-1 8-6 4q-3 0-3-3z" fill="#b8bcc4"/></svg></button>
        <button aria-label="Battery"><svg width="20" height="18" viewBox="0 0 20 18"><path d="M5 5.500h13v8H5zM19 8v3M0 3h5v3l-2 2v4M1 3V1M4 3V1" fill="none" stroke="#fff" stroke-width="1.300"/><path d="M7 7h10v5H7z" fill="#fff"/></svg></button>
        <button aria-label="Network"><svg width="18" height="18" viewBox="0 0 18 18" fill="none" stroke="#fff" stroke-width="1.300"><path d="M1 17Q1 2 16 1M5 17Q5 6 16 5M9 17Q9 10 16 9"/><circle cx="14" cy="15" r="2" fill="#fff" stroke="none"/></svg></button>
        <button aria-label="Volume"><svg width="20" height="18" viewBox="0 0 20 18" fill="none" stroke="#fff" stroke-width="1.300"><path d="M1 6h3l4-4v14l-4-4H1zM11 6q2 3 0 6M14 4q3 5 0 10"/><path d="M17 2q4 7 0 14" stroke="#8a93a6"/></svg></button>
      </div>
      <div class="clock"><time>08:54</time><time>04/01/2024</time></div>
      <button class="notify" aria-label="Notifications"><svg width="32" height="36" viewBox="0 0 32 36"><path d="M1 4h20v17h-9l-6 5v-5H1z" fill="#fff"/><path d="M5 9h12M5 13h12M5 17h8" stroke="#1b2943" stroke-width="1.300"/><circle cx="20" cy="25" r="10" fill="#33383e" stroke="#9a9da2"/><text x="20" y="30" text-anchor="middle" font-size="13" font-weight="600" fill="#fff">3</text></svg></button>
    </div>
  </footer>
</div>
</body>
</html>
```
FILE: styles.css
```css
* { box-sizing: border-box; }
body { margin: 0; font-family: "Open Sans", "Noto Sans", sans-serif; font-size: 14px; color: #111; }
button { border: 0; padding: 0; background: none; font: inherit; color: inherit; display: flex; align-items: center; justify-content: center; }
input { border: 0; outline: 0; padding: 0; background: none; font: inherit; color: inherit; min-width: 0; }
a { color: #1a73e8; text-decoration: none; }
svg { display: block; flex: none; }
.defs { position: absolute; width: 0; height: 0; }

.browser { display: flex; flex-direction: column; height: 100vh; background: #f7f7f7; overflow: hidden; }

.tabstrip { display: flex; height: 40px; flex: none; background: #cdcdcd; }
.strip-tools { display: flex; align-items: center; gap: 10px; width: 158px; padding-left: 8px; }
.strip-tools button { width: 40px; }
.tabs { display: flex; flex: 0 1 1497px; min-width: 0; }
.tab { position: relative; display: flex; align-items: center; flex: 1; min-width: 0; padding-left: 15px; }
.tab::before { content: ""; position: absolute; left: 1px; top: 8px; width: 1px; height: 24px; background: #7d7d7d; }
.tab.active { background: #f7f7f7; border-radius: 8px 8px 0 0; }
.tab.active::before { display: none; }
.fav { width: 20px; height: 20px; }
.gh-grey { color: #8b8e92; }
.gh-dark { color: #24292f; }
.tab-title { width: 70px; margin: 0 9px 0 12px; overflow: hidden; white-space: nowrap; line-height: 24px; mask-image: linear-gradient(90deg, #000 46px, transparent 70px); }
.x { width: 12px; height: 12px; }
.newtab { width: 42px; }
.winctl { display: flex; margin-left: auto; }
.winctl button { width: 58px; }

.toolbar { display: flex; align-items: center; height: 48px; flex: none; padding-left: 6px; }
.toolbar > button { width: 56px; height: 40px; }
.address { display: flex; align-items: center; flex: 1; height: 38px; margin: 0 7px; padding: 0 6px 0 23px; background: #fff; border-radius: 19px; box-shadow: 0 0 3px #ddd; }
.url { flex: 1; margin-left: 21px; font-size: 16px; line-height: 24px; color: transparent; background: linear-gradient(90deg, #6e6e6e 55px, #000 55px, #000 135px, #6e6e6e 135px); background-clip: text; -webkit-background-clip: text; }
.address button { width: 50px; height: 36px; }
.tools { display: flex; }
.tools button { width: 55px; height: 40px; }
.tools .copilot { width: 53px; }

.middle { display: flex; flex: 1; min-height: 0; padding-left: 5px; }
.page { display: flex; flex: 1; min-width: 0; margin-bottom: 4px; background: #fff; border-radius: 10px; overflow: hidden; box-shadow: 0 0 2px 1px #d9d9d9; }
.content { display: flex; flex-direction: column; flex: 1; min-width: 0; }
.preview { display: flex; height: 500px; flex: none; margin: 69px 0 101px; }
.stage { position: relative; display: flex; justify-content: center; flex: 1; overflow: hidden; }
.device { display: flex; width: 1010px; padding: 0 29px 0 25px; background: #f7f9f9; }
.site { flex: 1; min-width: 0; background: #f3f3f3; }
.site-scroll { width: 14px; border-left: 3px solid #fbfbfb; background: #8b8b8b; }
.copy { height: 281px; padding: 22px 25px 0; overflow: hidden; font-family: Georgia, "Liberation Serif", serif; font-size: 22px; color: #333; }
.copy p { margin: 0 0 20px; line-height: 32px; }
.copy h2 { margin: 26px 0 28px; font-size: 36px; line-height: 44px; }
.map { position: relative; height: 219px; width: 750px; overflow: hidden; font-family: Roboto, sans-serif; }
.labels { font-size: 13px; fill: #444; stroke: #fff; stroke-width: 3px; paint-order: stroke; stroke-linejoin: round; }
.area { font-size: 15px; font-weight: 500; letter-spacing: 1px; fill: #555; }
.area.small { font-size: 12px; }
.place { position: absolute; left: 13px; top: 13px; display: flex; justify-content: space-between; width: 376px; height: 115px; padding: 10px 23px 0 14px; background: #fff; border-radius: 2px; box-shadow: 0 1px 4px rgba(0,0,0,.3); }
.place-info { display: flex; flex-direction: column; font-size: 15px; line-height: 24px; }
.place-info strong { font-size: 18px; font-weight: 500; color: #000; }
.place-info span { margin: 4px 0 20px; color: #5b5b5b; }
.directions { display: flex; flex-direction: column; align-items: center; padding-top: 7px; font-size: 15px; line-height: 28px; }
.popup { position: absolute; right: -8px; top: 408px; width: 95px; height: 75px; background: #fff; border-radius: 3px; box-shadow: 0 0 5px 1px rgba(0,0,0,.4); }

.scrollbar { display: flex; flex-direction: column; align-items: center; width: 19px; flex: none; padding: 11px 0 12px; background: #fcfcfc; }
.up, .down { border: 6px solid transparent; border-top-width: 0; border-bottom: 6px solid #8b8b8b; }
.down { transform: rotate(180deg); }
.track { display: flex; flex-direction: column; flex: 1; width: 11px; }
.track::before, .track::after { content: ""; flex: 198; }
.track b { flex: 104; border-radius: 6px; background: #636363; }
.track::after { flex: 163; }
.outer .track::before { flex: 148; }
.outer .track b { flex: 237; background: #8b8b8b; }
.outer .track::after { flex: 518; }

.notice { flex: 1; padding-top: 91px; background: #f5f9fa; text-align: center; }
.notice h1 { margin: 0; font-family: Inter, sans-serif; font-size: 47px; font-weight: 600; line-height: 54px; color: #1c2349; }

.sidebar { display: flex; flex-direction: column; align-items: center; width: 55px; flex: none; padding: 2px 1px 0 0; }
.sidebar button { width: 50px; height: 50px; }
.sidebar hr { width: 35px; height: 1px; margin: 0; border: 0; background: #bbb; }
.side-group { padding-bottom: 16px; }
.side-add { margin-top: 14px; }
.side-bottom { display: flex; flex-direction: column; align-items: center; margin-top: auto; padding-bottom: 2px; }
.side-bottom hr { margin-bottom: 3px; }

.taskbar { display: flex; height: 50px; flex: none; color: #fff; background: linear-gradient(90deg, #20353f 50%, #1b2743 85%); }
.start { width: 60px; }
.search { display: flex; align-items: center; width: 360px; padding: 0 14px; background: #f2f2f2; border: 1px solid #bbb; color: #222; }
.search input { flex: 1; margin-left: 14px; font-size: 18px; }
.taskview { width: 63px; }
.apps { display: flex; }
.apps button { width: 62px; border-bottom: 3px solid transparent; }
.apps .current { background: #50626b; border-color: #76b9ed; }
.apps .open { background: linear-gradient(#76b9ed, #76b9ed) center bottom / 51px 3px no-repeat border-box; }
.tray { display: flex; align-items: center; margin-left: auto; }
.tray button { height: 50px; }
.stock { gap: 12px; margin-right: 24px; font-size: 17px; }
.loss { color: #f2606a; }
.status { display: flex; }
.status button { width: 30px; }
.clock { display: flex; flex-direction: column; align-items: center; width: 92px; line-height: 23px; }
.notify { width: 62px; border-right: 1px solid #8a93a6; margin-right: 5px; }
```
